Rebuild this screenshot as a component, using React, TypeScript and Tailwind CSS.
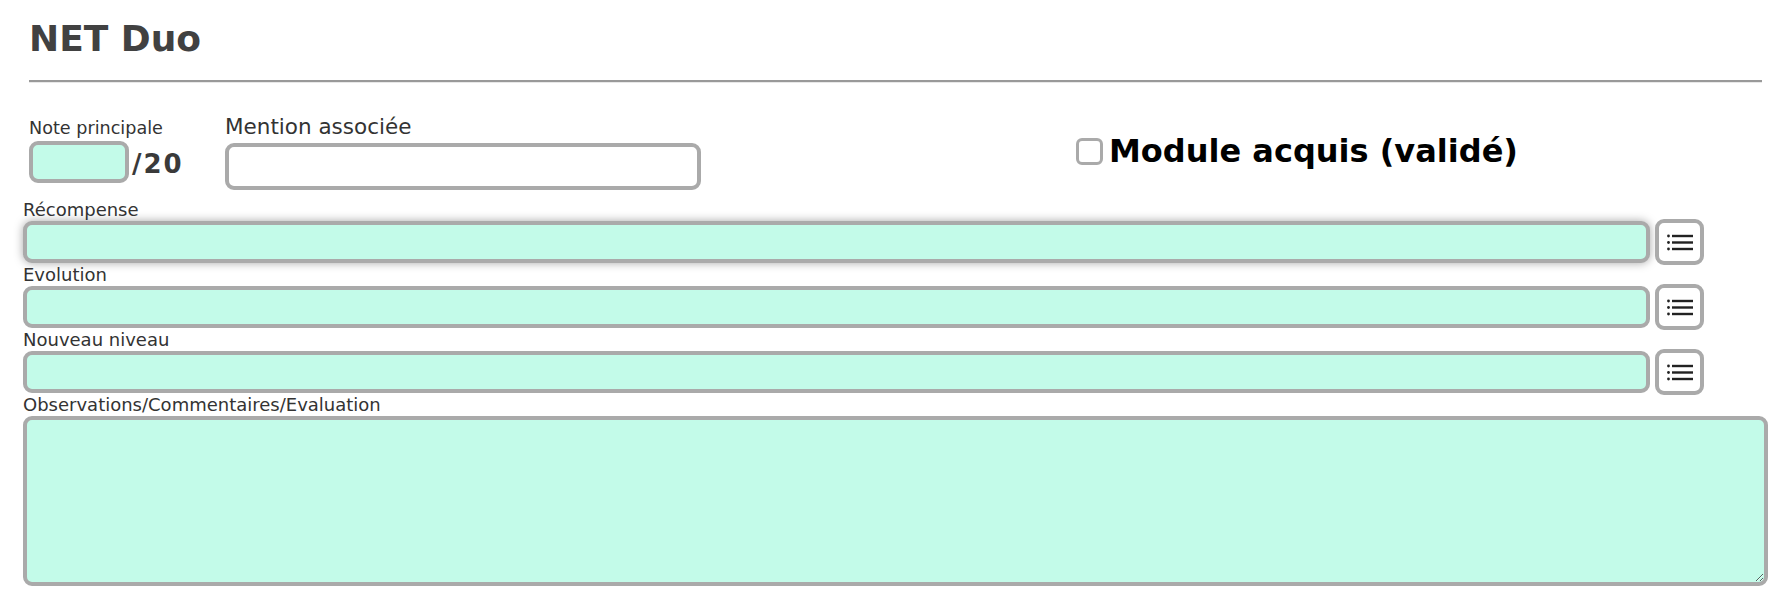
const inputCls =
  "block h-[42px] w-[1627px] rounded-[9px] border-4 border-[#aaa] bg-[#c3fbe9] px-2 outline-none";

function ListIcon() {
  return (
    <svg width="26" height="17" viewBox="0 0 26 17" fill="#222">
      <circle cx="1.5" cy="2" r="1.4" />
      <circle cx="1.5" cy="8.5" r="1.4" />
      <circle cx="1.5" cy="15" r="1.4" />
      <rect x="5" y="0.8" width="21" height="2.4" />
      <rect x="5" y="7.3" width="21" height="2.4" />
      <rect x="5" y="13.8" width="21" height="2.4" />
    </svg>
  );
}

function FieldRow({ label, shadow }: { label: string; shadow?: boolean }) {
  return (
    <div className="mb-px">
      <div className="text-[18px] leading-[22px] text-[#333]">{label}</div>
      <div className="flex h-[42px] items-center gap-[5px]">
        <input
          type="text"
          className={`${inputCls} ${
            shadow ? "shadow-[0_0_10px_rgba(0,0,0,0.35)]" : ""
          }`}
        />
        <button className="-my-[2px] flex h-[46px] w-[49px] shrink-0 items-center justify-center rounded-[9px] border-4 border-[#aaa] bg-white">
          <ListIcon />
        </button>
      </div>
    </div>
  );
}

export default function App() {
  return (
    <div
      className="min-h-[605px] w-[1788px] bg-white"
      style={{ fontFamily: '"DejaVu Sans", Verdana, sans-serif' }}
    >
      {/* en-tête */}
      <div className="pl-[29px] pr-[26px] pt-[18px]">
        <h1 className="text-[36px] font-bold leading-[41px] text-[#414141]">
          NET Duo
        </h1>
        <div className="mt-[21px] h-[3px] border-t-2 border-b border-t-[#999] border-b-[#e8e8e8]" />
      </div>

      {/* note, mention, module */}
      <div className="mt-[30px] flex items-start pl-[29px]">
        <div className="w-[196px] pt-[5px]">
          <div className="text-[17.6px] leading-[20px] text-[#333]">
            Note principale
          </div>
          <div className="mt-[3px] flex items-center">
            <input
              type="text"
              className="block h-[42px] w-[100px] rounded-[9px] border-4 border-[#aaa] bg-[#c3fbe9] px-1 outline-none"
            />
            <span className="ml-[3px] mt-[4px] text-[26px] font-bold leading-none tracking-[2px] text-[#3a3a3a]">
              /20
            </span>
          </div>
        </div>
        <div className="w-[476px] pt-[2px]">
          <div className="text-[21.5px] leading-[24px] text-[#333]">
            Mention associée
          </div>
          <input
            type="text"
            className="mt-[4px] block h-[47px] w-[476px] rounded-[9px] border-4 border-[#aaa] bg-white px-2 outline-none"
          />
        </div>
        <label className="ml-[375px] mt-[20px] flex items-center gap-[6px]">
          <span className="block h-[27px] w-[27px] rounded-[6px] border-[3px] border-[#aaa] bg-white" />
          <span className="text-[32px] font-bold leading-[37px] text-black">
            Module acquis (validé)
          </span>
        </label>
      </div>

      {/* champs */}
      <div className="mt-[9px] pl-[23px] pr-[20px] pb-[20px]">
        <FieldRow label="Récompense" shadow />
        <FieldRow label="Evolution" />
        <FieldRow label="Nouveau niveau" />
        <div className="text-[18px] leading-[22px] text-[#333]">
          Observations/Commentaires/Evaluation
        </div>
        <textarea className="block h-[170px] w-[1745px] rounded-[9px] border-4 border-[#aaa] bg-[#c3fbe9] p-2 outline-none" />
      </div>
    </div>
  );
}
